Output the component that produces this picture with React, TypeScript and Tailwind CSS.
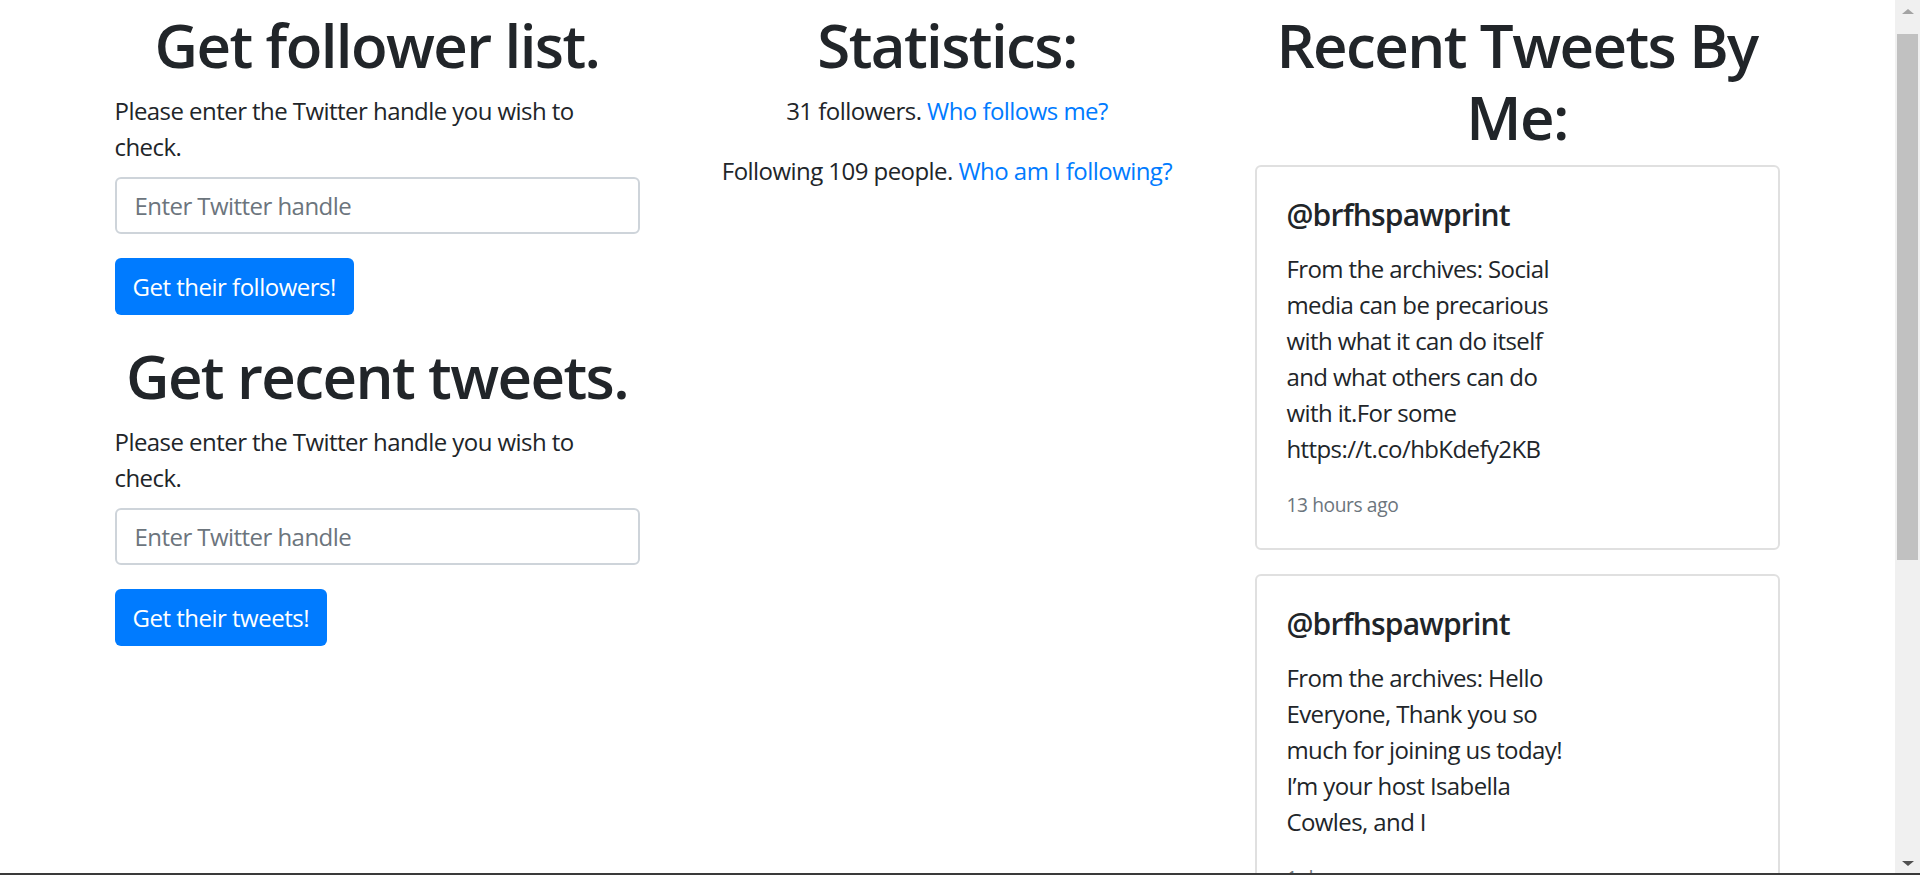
import React from "react";

const tweets = [
  {
    handle: "@brfhspawprint",
    lines: [
      "From the archives: Social",
      "media can be precarious",
      "with what it can do itself",
      "and what others can do",
      "with it.For some",
      "https://t.co/hbKdefy2KB",
    ],
    time: "13 hours ago",
  },
  {
    handle: "@brfhspawprint",
    lines: [
      "From the archives: Hello",
      "Everyone, Thank you so",
      "much for joining us today!",
      "I’m your host Isabella",
      "Cowles, and I",
    ],
    time: "1 day ago",
  },
];

function HandleForm({ title, button }: { title: string; button: string }) {
  return (
    <div>
      <h1 className="text-[60px] leading-[72px] font-semibold tracking-[-1.6px] text-center mb-[12px]">{title}</h1>
      <label className="block text-[24px] leading-[36px] tracking-[-0.55px] mb-[12px]">
        Please enter the Twitter handle you wish to
        <br />
        check.
      </label>
      <input
        type="text"
        placeholder="Enter Twitter handle"
        className="block w-full h-[57px] border-2 border-[#ced4da] rounded-[6px] px-[18px] text-[24px] tracking-[-0.55px] text-[#495057] placeholder:text-[#6c757d] outline-none mb-[24px]"
      />
      <button className="h-[57px] px-[18px] bg-[#007bff] text-white text-[24px] leading-[36px] tracking-[-0.5px] rounded-[6px]">
        {button}
      </button>
    </div>
  );
}

function TweetCard({ tweet }: { tweet: (typeof tweets)[number] }) {
  return (
    <div className="border-2 border-[#e0e0e0] rounded-[6px] p-[30px] mb-[24px]">
      <h5 className="text-[30px] leading-[36px] font-semibold tracking-[-0.8px] mb-[18px]">{tweet.handle}</h5>
      <p className="text-[24px] leading-[36px] tracking-[-0.6px] whitespace-nowrap">
        {tweet.lines.map((l, i) => (
          <React.Fragment key={i}>
            {l}
            {i < tweet.lines.length - 1 && <br />}
          </React.Fragment>
        ))}
      </p>
      <p className="mt-[24px] text-[19.2px] leading-[27px] tracking-[-0.4px] text-[#6c757d]">{tweet.time}</p>
    </div>
  );
}

export default function App() {
  return (
    <div className="h-[875px] overflow-hidden bg-white text-[#212529] font-['Open_Sans',sans-serif]">
      <div className="ml-[92px] w-[1710px] grid grid-cols-3 pt-[9px]">
        {/* Forms */}
        <div className="px-[22.5px]">
          <HandleForm title="Get follower list." button="Get their followers!" />
          <div className="mt-[25px]">
            <HandleForm title="Get recent tweets." button="Get their tweets!" />
          </div>
        </div>

        {/* Statistics */}
        <div className="px-[22.5px] text-center tracking-[-0.55px]">
          <h1 className="text-[60px] leading-[72px] font-semibold tracking-[-1.6px] mb-[12px]">Statistics:</h1>
          <p className="text-[24px] leading-[36px] mb-[24px]">
            31 followers. <a className="text-[#007bff]">Who follows me?</a>
          </p>
          <p className="text-[24px] leading-[36px]">
            Following 109 people. <a className="text-[#007bff]">Who am I following?</a>
          </p>
        </div>

        {/* Tweets */}
        <div className="px-[22.5px]">
          <h1 className="text-[60px] leading-[72px] font-semibold tracking-[-1.6px] text-center mb-[12px]">
            Recent Tweets By
            <br />
            Me:
          </h1>
          {tweets.map((t, i) => (
            <TweetCard key={i} tweet={t} />
          ))}
        </div>
      </div>

      {/* window scrollbar */}
      <div className="fixed top-0 right-0 w-[25px] h-[875px] bg-[#f0f0f0]">
        <div className="flex justify-center pt-[9px]">
          <div className="w-0 h-0 border-l-[6px] border-r-[6px] border-b-[5px] border-l-transparent border-r-transparent border-b-[#a3a3a3]" />
        </div>
        <div className="absolute left-[2px] right-[2px] top-[34px] h-[526px] bg-[#c1c1c1]" />
        <div className="absolute bottom-[9px] left-0 right-0 flex justify-center">
          <div className="w-0 h-0 border-l-[6px] border-r-[6px] border-t-[5px] border-l-transparent border-r-transparent border-t-[#505050]" />
        </div>
      </div>
      <div className="fixed bottom-0 left-0 right-0 h-[2px] bg-[#3a3a3a]" />
    </div>
  );
}
